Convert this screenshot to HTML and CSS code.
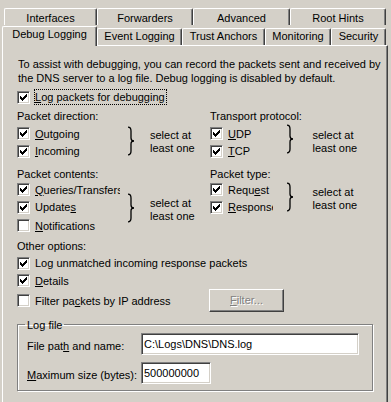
FILE: index.html
```html
<!DOCTYPE html>
<html>
<head>
<meta charset="utf-8">
<title>DNS Properties - Debug Logging</title>
<link rel="stylesheet" href="styles.css">
</head>
<body>
<svg class="defs" width="0" height="0" aria-hidden="true">
  <symbol id="chk" viewBox="0 0 7 7"><path d="M0 2h1v3H0zM1 3h1v3H1zM2 4h1v3H2zM3 3h1v3H3zM4 2h1v3H4zM5 1h1v3H5zM6 0h1v3H6z"/></symbol>
  <symbol id="brc" viewBox="0 0 8 30"><path d="M1 1.2Q4 1.2 4 5V12Q4 15 7 15Q4 15 4 18V25Q4 28.8 1 28.8" fill="none" stroke="#000" stroke-width="1.3"/></symbol>
</svg>
<div class="dialog">
  <div class="tabs">
    <div class="tabrow back">
      <div class="tab w-int">Interfaces</div>
      <div class="tab w-fwd">Forwarders</div>
      <div class="tab w-adv">Advanced</div>
      <div class="tab w-root">Root Hints</div>
    </div>
    <div class="tabrow front">
      <div class="tab sel w-dbg">Debug Logging</div>
      <div class="tab w-evt">Event Logging</div>
      <div class="tab w-trust">Trust Anchors</div>
      <div class="tab w-mon">Monitoring</div>
      <div class="tab w-sec">Security</div>
    </div>
  </div>
  <div class="panel">
    <p class="desc">To assist with debugging, you can record the packets sent and received by<br>the DNS server to a log file. Debug logging is disabled by default.</p>
    <div class="lead"><span class="cb"><svg class="ck"><use href="#chk"/></svg></span><span class="focus"><u>L</u>og packets for debugging</span></div>

    <div class="grid">
      <div class="grp">
        <div class="lbl">Packet direction:</div>
        <div class="opts o1">
          <div class="list lw">
            <div class="row"><span class="cb"><svg class="ck"><use href="#chk"/></svg></span><span class="t"><u>O</u>utgoing</span></div>
            <div class="row"><span class="cb"><svg class="ck"><use href="#chk"/></svg></span><span class="t"><u>I</u>ncoming</span></div>
          </div>
          <svg class="brace b1"><use href="#brc"/></svg>
          <div class="note nl n1">select at<br>least one</div>
        </div>
      </div>
      <div class="grp">
        <div class="lbl">Transport protocol:</div>
        <div class="opts o1">
          <div class="list rw">
            <div class="row"><span class="cb"><svg class="ck"><use href="#chk"/></svg></span><span class="t"><u>U</u>DP</span></div>
            <div class="row"><span class="cb"><svg class="ck"><use href="#chk"/></svg></span><span class="t"><u>T</u>CP</span></div>
          </div>
          <svg class="brace b2"><use href="#brc"/></svg>
          <div class="note nr n1">select at<br>least one</div>
        </div>
      </div>
      <div class="grp">
        <div class="lbl">Packet contents:</div>
        <div class="opts o2">
          <div class="list lw">
            <div class="row"><span class="cb"><svg class="ck"><use href="#chk"/></svg></span><span class="t clip-q"><u>Q</u>ueries/Transfers</span></div>
            <div class="row"><span class="cb"><svg class="ck"><use href="#chk"/></svg></span><span class="t">Update<u>s</u></span></div>
            <div class="row r3"><span class="cb"></span><span class="t"><u>N</u>otifications</span></div>
          </div>
          <svg class="brace b3"><use href="#brc"/></svg>
          <div class="note nl n3">select at<br>least one</div>
        </div>
      </div>
      <div class="grp">
        <div class="lbl">Packet type:</div>
        <div class="opts o2">
          <div class="list rw">
            <div class="row"><span class="cb"><svg class="ck"><use href="#chk"/></svg></span><span class="t">Requ<u>e</u>st</span></div>
            <div class="row"><span class="cb"><svg class="ck"><use href="#chk"/></svg></span><span class="t clip-r"><u>R</u>esponse</span></div>
          </div>
          <svg class="brace b4"><use href="#brc"/></svg>
          <div class="note nr n4">select at<br>least one</div>
        </div>
      </div>
    </div>

    <div class="lbl other">Other options:</div>
    <div class="list olist">
      <div class="row"><span class="cb"><svg class="ck"><use href="#chk"/></svg></span><span class="t">Log unmatched incoming response packets</span></div>
      <div class="row"><span class="cb"><svg class="ck"><use href="#chk"/></svg></span><span class="t"><u>D</u>etails</span></div>
      <div class="row frow-filter"><div class="fl"><span class="cb"></span><span class="t">Filter pa<u>c</u>kets by IP address</span></div><div class="btn"><u>F</u>ilter...</div></div>
    </div>

    <fieldset class="gbox">
      <legend>Log file</legend>
      <div class="frow"><span class="flbl">File pat<u>h</u> and name:</span><div class="inp wide">C:\Logs\DNS\DNS.log</div></div>
      <div class="frow f2"><span class="flbl"><u>M</u>aximum size (bytes):</span><div class="inp narrow">500000000</div></div>
    </fieldset>
  </div>
</div>
</body>
</html>
```
FILE: styles.css
```css
html, body {
  margin: 0;
  padding: 0;
}
body {
  background: #d4d0c8;
  color: #000;
  font-family: "Liberation Sans", Arial, sans-serif;
  font-size: 11px;
  width: 391px;
  height: 402px;
  overflow: hidden;
}
.defs {
  position: absolute;
  width: 0;
  height: 0;
}
u {
  text-decoration: underline;
  text-underline-offset: 1px;
}
.dialog {
  margin-left: 2px;
  width: 386px;
}

/* ---------- tabs ---------- */
.tabs {
  height: 45px;
}
.tabrow {
  display: flex;
}
.back {
  padding: 8px 0 0 2px;
  height: 17px;
}
.front {
  height: 20px;
  align-items: flex-end;
}
.tab {
  box-sizing: border-box;
  height: 17px;
  border-top: 1px solid #fff;
  border-left: 1px solid #fff;
  border-right: 1px solid #404040;
  border-radius: 2px 2px 0 0;
  box-shadow: inset -1px 0 #808080;
  text-align: center;
  line-height: 13px;
  white-space: nowrap;
  background: #d4d0c8;
}
.back .tab {
  padding-top: 3px;
}
.front .tab {
  padding-top: 1px;
}
.tab.sel {
  height: 20px;
  margin-bottom: -1px;
  position: relative;
  z-index: 1;
}
.w-int { width: 93px; }
.w-fwd { width: 96px; }
.w-adv { width: 97px; }
.w-root { width: 96px; }
.w-dbg { width: 95px; }
.w-evt { width: 85px; }
.w-trust { width: 83px; }
.w-mon { width: 66px; }
.w-sec { width: 55px; }

/* ---------- panel ---------- */
.panel {
  box-sizing: border-box;
  height: 360px;
  border-top: 1px solid #fff;
  border-left: 1px solid #fff;
  border-right: 1px solid #404040;
  box-shadow: inset -1px 0 #808080;
  padding: 11px 0 0 14px;
}
.desc {
  margin: 0 0 0 1px;
  line-height: 14px;
  white-space: nowrap;
}
.lead {
  display: flex;
  align-items: center;
  height: 18px;
  margin-top: 3px;
}
.focus {
  margin-left: 4px;
  border: 1px dotted #000;
  line-height: 14px;
  padding-right: 1px;
  white-space: nowrap;
}

/* checkbox */
.cb {
  box-sizing: border-box;
  flex: none;
  width: 13px;
  height: 13px;
  background: #fff;
  border: 1px solid;
  border-color: #808080 #fff #fff #808080;
  box-shadow: inset 1px 1px #404040, inset -1px -1px #d4d0c8;
}
.ck {
  display: block;
  width: 7px;
  height: 7px;
  margin: 2px 0 0 2px;
  fill: #000;
  shape-rendering: crispEdges;
}

.grid {
  display: grid;
  grid-template-columns: 193px 1fr;
  row-gap: 6.5px;
  margin-top: 3px;
}
.lbl {
  height: 14px;
  line-height: 14px;
  white-space: nowrap;
}
.opts {
  display: flex;
  align-items: flex-start;
}
.o1 { margin-top: 2px; }
.o2 { margin-top: 0.5px; }
.lw { width: 110px; }
.rw { width: 76px; }
.row {
  display: flex;
  align-items: center;
  height: 17.5px;
}
.r3 {
  margin-top: 1px;
}
.t {
  margin-left: 5px;
  white-space: nowrap;
}
.clip-q {
  width: 85px;
  overflow: hidden;
}
.clip-r {
  width: 45px;
  overflow: hidden;
}
.brace {
  flex: none;
  width: 8px;
  height: 30px;
}
.b1 { margin-top: 1px; }
.b2 { margin-top: -1.5px; }
.b3 { margin-top: 11.5px; }
.b4 { margin-top: 0.5px; }
.note {
  line-height: 13px;
  white-space: nowrap;
}
.nl { margin-left: 15px; }
.nr { margin-left: 18.5px; }
.n1 { margin-top: 3.5px; }
.n3 { margin-top: 15.5px; }
.n4 { margin-top: 4.5px; }

.other {
  margin-top: 4px;
}
.olist {
  margin-top: 2px;
}
.frow-filter {
  display: grid;
  grid-template-columns: 192px 75px;
  align-items: center;
}
.fl {
  display: flex;
  align-items: center;
}
.btn {
  align-self: start;
  margin-top: -0.5px;
  box-sizing: border-box;
  width: 75px;
  height: 23px;
  border: 1px solid;
  border-color: #fff #404040 #404040 #fff;
  box-shadow: inset -1px -1px #808080;
  text-align: center;
  line-height: 21px;
  color: #808080;
  text-shadow: 1px 1px 0 #fff;
}

/* ---------- group box ---------- */
.gbox {
  box-sizing: border-box;
  width: 356px;
  min-width: 0;
  margin: 11px 0 0 0;
  padding: 2px 0 6px 9px;
  border: 1px solid #808080;
  box-shadow: inset 1px 1px #fff, 1px 1px 0 #fff;
}
.gbox legend {
  margin-left: -2px;
  padding: 1px 2px 0;
  line-height: 12px;
}
.frow {
  display: flex;
  align-items: center;
  height: 22px;
}
.f2 {
  margin-top: 7px;
}
.flbl {
  width: 114px;
  padding-top: 3px;
  white-space: nowrap;
}
.inp {
  box-sizing: border-box;
  height: 22px;
  border: 1px solid;
  border-color: #808080 #fff #fff #808080;
  box-shadow: inset 1px 1px #404040, inset -1px -1px #d4d0c8;
  background: #fff;
  padding-left: 2px;
  line-height: 20px;
  white-space: nowrap;
}
.wide { width: 218px; }
.narrow { width: 70px; }
```
